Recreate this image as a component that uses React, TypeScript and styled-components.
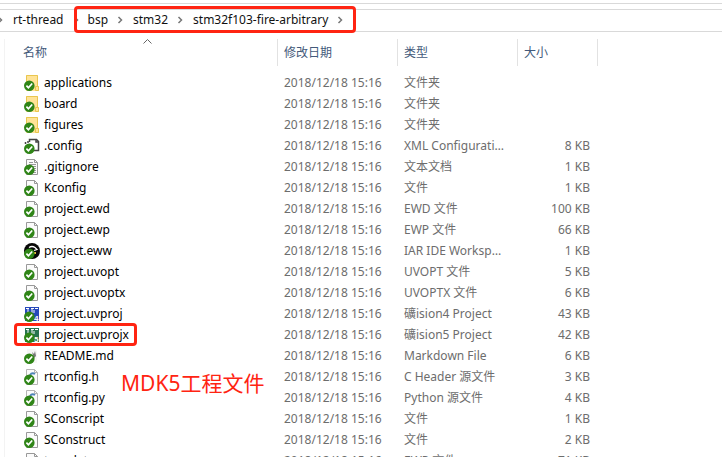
import React from "react";
import styled, { createGlobalStyle } from "styled-components";

const GlobalStyle = createGlobalStyle`
  * { box-sizing: border-box; }
  html, body { margin: 0; height: 100%; overflow: hidden; background: #fff; }
  #root { height: 100%; }
  body, button { font-family: "Noto Sans", "Noto Sans CJK SC", sans-serif; font-size: 12px; }
`;

const Explorer = styled.div`
  position: relative;
  display: flex;
  flex-direction: column;
  height: 100vh;
  overflow: hidden;
  line-height: 20px;
`;

const TopEdge = styled.div`
  flex: none;
  height: 4px;
  border-bottom: 1px solid #d9d9d9;
`;

const AddressBar = styled.nav`
  flex: none;
  display: flex;
  align-items: center;
  height: 23px;
  margin-top: 5px;
  padding-bottom: 2px;
  border: solid #d9d9d9;
  border-width: 1px 0;
`;

const Crumb = styled.button`
  border: 0;
  padding: 0;
  background: none;
  color: #111;
  line-height: 20px;
  white-space: nowrap;
`;

const Arrow = styled.svg`
  flex: none;
  width: 6px;
  height: 8px;
  margin: 0 10px 0 9px;
  fill: none;
  stroke: #777;
  stroke-width: 1.5;

  &:first-child { margin-left: -3px; }
`;

const CrumbFrame = styled.div`
  display: flex;
  align-items: center;
  height: 27px;
  margin-left: -15px;
  padding-left: 11px;
  border: 3px solid #ff2412;
  border-radius: 4px;
`;

const Content = styled.main`
  flex: none;
  margin: 7px 0 0 4px;
  border-left: 1px solid #f3f3f3;
`;

const FileTable = styled.table`
  width: 593px;
  table-layout: fixed;
  border-collapse: separate;
  border-spacing: 0;
`;

const NameCol = styled.col` width: 273px; `;
const WideCol = styled.col` width: 120px; `;
const SizeCol = styled.col` width: 80px; `;

const HeadCell = styled.th<{ $first?: boolean }>`
  position: relative;
  height: 27px;
  padding: 0 0 0 ${(p) => (p.$first ? 18 : 6)}px;
  border-right: 1px solid #e2e2e2;
  color: #43597a;
  font-weight: 400;
  text-align: left;
`;

const SortMark = styled.svg`
  position: absolute;
  top: 0;
  left: 50%;
  width: 9px;
  height: 5px;
  margin-left: 2px;
  fill: none;
  stroke: #666;
`;

const Spacer = styled.tr` height: 6px; `;

const Cell = styled.td<{ $end?: boolean }>`
  height: 21px;
  padding: 0 ${(p) => (p.$end ? 8 : 12)}px 0 6px;
  overflow: hidden;
  color: #6d6d6d;
  text-align: ${(p) => (p.$end ? "right" : "left")};
  text-overflow: ellipsis;
  white-space: nowrap;
`;

const NameCell = styled.td`
  height: 21px;
  padding: 0 0 0 9px;
`;

const NameButton = styled.button<{ $marked?: boolean }>`
  display: flex;
  align-items: center;
  gap: 4px;
  height: 23px;
  margin: -1px 0;
  padding: 0 5px 0 7px;
  border: 3px solid ${(p) => (p.$marked ? "#ff2412" : "transparent")};
  border-radius: 4px;
  background: none;
  color: #000;
  line-height: 20px;
  white-space: nowrap;
`;

const Glyph = styled.svg`
  flex: none;
  width: 16px;
  height: 16px;
`;

const Note = styled.p`
  position: absolute;
  top: 368px;
  left: 121px;
  margin: 0;
  color: #ff2412;
  font-size: 21px;
  line-height: 30px;
`;

type Kind = "folder" | "xml" | "text" | "page" | "iar" | "uv4" | "uv5" | "md" | "code";

const Page = ({ edge = "#999" }: { edge?: string }) => (
  <>
    <path d="M2.5.5h8l3 3v12h-11z" fill="#fbfbfb" stroke={edge} />
    <path d="M10.5.5v3h3" fill="none" stroke={edge} />
  </>
);

const Vision = ({ color, digit }: { color: string; digit: string }) => (
  <>
    <path d="M1 1h14v14H1z" fill={color} />
    <path d="M2 2.5h3M4 2v5h4V2M7 2.5h3M10 4v3M11 2.5h3" stroke="#fff" fill="none" />
    <text x="10" y="15" fill="#fff" fontSize="8" fontWeight="700" fontFamily="Liberation Sans, sans-serif">{digit}</text>
  </>
);

const art: Record<Kind, React.ReactNode> = {
  folder: (
    <>
      <path d="M2 0h12v11h1v5H2z" fill="#ffe396" />
      <path d="M2.5 15V.5h11v10.5M11.5 15.5v-4h3v4z" fill="none" stroke="#e9c64f" />
    </>
  ),
  xml: (
    <>
      <path d="M5.5 4V1.5h7l2 2v9h-6" fill="#fff" stroke="#444" strokeWidth="1.5" />
      <path d="M12 1v3h3M1.5 6V4M4 5V3" fill="none" stroke="#444" strokeWidth="1.5" />
    </>
  ),
  text: (
    <>
      <Page />
      <path d="M5 3.5h4M5 5.5h7M5 7.5h7M5 9.5h7M8 11.5h4M8 13.5h4" stroke="#999" />
    </>
  ),
  page: <Page />,
  iar: (
    <>
      <circle cx="8" cy="8" r="8" fill="#080808" />
      <path d="M5 4.5q3-2 6 0l2 2-3 1" fill="none" stroke="#fff" strokeWidth="1.3" />
      <path d="M10 9h2v2h-2z" fill="#e7b93c" />
    </>
  ),
  uv4: <Vision color="#2749bb" digit="4" />,
  uv5: <Vision color="#28744f" digit="5" />,
  md: (
    <>
      <path d="M3 1h8l2 2v12H3z" fill="#f6f6f6" />
      <path d="M8 4l2 2 1-3 1 5-2 2" fill="#777" />
    </>
  ),
  code: (
    <>
      <Page edge="#b5b5b5" />
      <path d="M6 6q2-3 5-1" fill="none" stroke="#4e83b8" strokeWidth="2" />
    </>
  ),
};

const FileIcon = ({ kind }: { kind: Kind }) => (
  <Glyph viewBox="0 0 16 16" aria-hidden="true">
    {art[kind]}
    <circle cx="5.3" cy="10.7" r="5.3" fill="#2f8517" />
    <path d="M2.4 10.7l2 2 3.8-4.2" fill="none" stroke="#fff" strokeWidth="1.7" />
  </Glyph>
);

const Chevron = () => (
  <Arrow viewBox="0 0 6 8" aria-hidden="true"><path d="M1.5 1l3 3-3 3" /></Arrow>
);

const files: [Kind, string, string, string][] = [
  ["folder", "applications", "文件夹", ""],
  ["folder", "board", "文件夹", ""],
  ["folder", "figures", "文件夹", ""],
  ["xml", ".config", "XML Configuration File", "8 KB"],
  ["text", ".gitignore", "文本文档", "1 KB"],
  ["page", "Kconfig", "文件", "1 KB"],
  ["page", "project.ewd", "EWD 文件", "100 KB"],
  ["page", "project.ewp", "EWP 文件", "66 KB"],
  ["iar", "project.eww", "IAR IDE Workspace", "1 KB"],
  ["page", "project.uvopt", "UVOPT 文件", "5 KB"],
  ["page", "project.uvoptx", "UVOPTX 文件", "6 KB"],
  ["uv4", "project.uvproj", "礦ision4 Project", "43 KB"],
  ["uv5", "project.uvprojx", "礦ision5 Project", "42 KB"],
  ["md", "README.md", "Markdown File", "6 KB"],
  ["code", "rtconfig.h", "C Header 源文件", "3 KB"],
  ["code", "rtconfig.py", "Python 源文件", "4 KB"],
  ["page", "SConscript", "文件", "1 KB"],
  ["page", "SConstruct", "文件", "2 KB"],
  ["page", "template.ewp", "EWP 文件", "71 KB"],
];

export default function App() {
  return (
    <Explorer>
      <GlobalStyle />
      <TopEdge />
      <AddressBar aria-label="Path">
        <Chevron />
        <Crumb>rt-thread</Crumb>
        <Chevron />
        <CrumbFrame>
          <Crumb>bsp</Crumb>
          <Chevron />
          <Crumb>stm32</Crumb>
          <Chevron />
          <Crumb>stm32f103-fire-arbitrary</Crumb>
          <Chevron />
        </CrumbFrame>
      </AddressBar>
      <Content>
        <FileTable>
          <colgroup><NameCol /><WideCol /><WideCol /><SizeCol /></colgroup>
          <thead>
            <tr>
              <HeadCell $first>
                名称
                <SortMark viewBox="0 0 9 5" aria-hidden="true"><path d="M.5 4.5l4-4 4 4" /></SortMark>
              </HeadCell>
              <HeadCell>修改日期</HeadCell>
              <HeadCell>类型</HeadCell>
              <HeadCell>大小</HeadCell>
            </tr>
          </thead>
          <tbody>
            <Spacer />
            {files.map(([kind, name, type, size]) => (
              <tr key={name}>
                <NameCell>
                  <NameButton $marked={kind === "uv5"}><FileIcon kind={kind} />{name}</NameButton>
                </NameCell>
                <Cell>2018/12/18 15:16</Cell>
                <Cell>{type}</Cell>
                <Cell $end>{size}</Cell>
              </tr>
            ))}
          </tbody>
        </FileTable>
      </Content>
      <Note>MDK5工程文件</Note>
    </Explorer>
  );
}
